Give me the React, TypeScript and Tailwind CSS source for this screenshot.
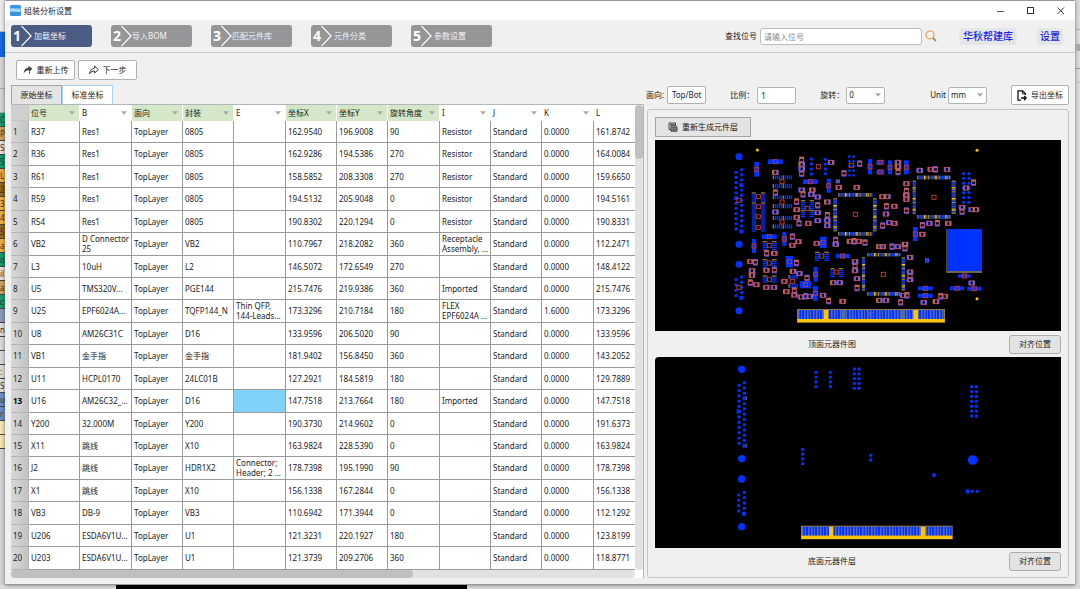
import React, { useState } from "react";

const BLUE = "#0033ff";
const GOLD = "#ffc400";
const RUST = "#b83a34";

type Pt = [number, number];
type Box = [number, number, number, number];

const headers: [string, boolean][] = [
  ["位号", true], ["B", false], ["面向", true], ["封装", true], ["E", false], ["坐标X", true],
  ["坐标Y", true], ["旋转角度", true], ["I", false], ["J", false], ["K", false], ["L", false],
];

const rows: string[][] = [
  ["R37", "Res1", "0805", "", "162.9540", "196.9008", "90", "Resistor", "0.0000", "161.8742"],
  ["R36", "Res1", "0805", "", "162.9286", "194.5386", "270", "Resistor", "0.0000", "164.0084"],
  ["R61", "Res1", "0805", "", "158.5852", "208.3308", "270", "Resistor", "0.0000", "159.6650"],
  ["R59", "Res1", "0805", "", "194.5132", "205.9048", "0", "Resistor", "0.0000", "194.5161"],
  ["R54", "Res1", "0805", "", "190.8302", "220.1294", "0", "Resistor", "0.0000", "190.8331"],
  ["VB2", "D Connector\n25", "VB2", "", "110.7967", "218.2082", "360", "Receptacle\nAssembly, ...", "0.0000", "112.2471"],
  ["L3", "10uH", "L2", "", "146.5072", "172.6549", "270", "", "0.0000", "148.4122"],
  ["U5", "TMS320V...", "PGE144", "", "215.7476", "219.9386", "360", "Imported", "0.0000", "215.7476"],
  ["U25", "EPF6024A...", "TQFP144_N", "Thin QFP,\n144-Leads...", "173.3296", "210.7184", "180", "FLEX\nEPF6024A ...", "1.6000", "173.3296"],
  ["U8", "AM26C31C", "D16", "", "133.9596", "206.5020", "90", "", "0.0000", "133.9596"],
  ["VB1", "金手指", "金手指", "", "181.9402", "156.8450", "360", "", "0.0000", "143.2052"],
  ["U11", "HCPL0170", "24LC01B", "", "127.2921", "184.5819", "180", "", "0.0000", "129.7889"],
  ["U16", "AM26C32_...", "D16", "", "147.7518", "213.7664", "180", "Imported", "0.0000", "147.7518"],
  ["Y200", "32.000M", "Y200", "", "190.3730", "214.9602", "0", "", "0.0000", "191.6373"],
  ["X11", "跳线", "X10", "", "163.9824", "228.5390", "0", "", "0.0000", "163.9824"],
  ["J2", "跳线", "HDR1X2", "Connector;\nHeader; 2 ...", "178.7398", "195.1990", "90", "", "0.0000", "178.7398"],
  ["X1", "跳线", "X10", "", "156.1338", "167.2844", "0", "", "0.0000", "156.1338"],
  ["VB3", "DB-9", "VB3", "", "110.6942", "171.3944", "0", "", "0.0000", "112.1292"],
  ["U206", "ESDA6V1U...", "U1", "", "121.3231", "220.1927", "180", "", "0.0000", "123.8199"],
  ["U203", "ESDA6V1U...", "U1", "", "121.3739", "209.2706", "360", "", "0.0000", "118.8771"],
];

const expand = (r: string[]) => [r[0], r[1], "TopLayer", r[2], r[3], r[4], r[5], r[6], r[7], "Standard", r[8], r[9]];

/* ---------- board drawings ---------- */

function Fins({ b, vertical }: { b: Box; vertical?: boolean }) {
  const [x0, y0, x1, y1] = b;
  const out: React.ReactNode[] = [];
  const len = vertical ? x1 - x0 : y1 - y0;
  for (let i = 0, k = 0; i < len; i += 6, k++) {
    const fill = k === 0 || k === 5 ? "#8c7440" : BLUE;
    out.push(
      vertical ? <rect key={i} x={x0 + i} y={y0} width={4} height={y1 - y0} fill={fill} />
        : <rect key={i} x={x0} y={y0 + i} width={x1 - x0} height={4} fill={fill} />
    );
  }
  return <>{out}</>;
}

function Pins({ b, vertical }: { b: Box; vertical?: boolean }) {
  const [x0, y0, x1, y1] = b;
  const colors = ["#a88a3c", BLUE, BLUE, "#2a45b0", BLUE, GOLD, "#b8963c", BLUE];
  const len = vertical ? y1 - y0 : x1 - x0;
  const out: React.ReactNode[] = [<rect key="bg" x={x0} y={y0} width={x1 - x0} height={y1 - y0} fill="#3a3820" />];
  for (let i = 0, k = 0; i < len; i += 4, k++) {
    const fill = colors[k % 8];
    out.push(
      vertical ? <rect key={i} x={x0} y={y0 + i} width={x1 - x0} height={3} fill={fill} />
        : <rect key={i} x={x0 + i} y={y0} width={3} height={y1 - y0} fill={fill} />
    );
  }
  return <>{out}</>;
}

function Mark({ x, y }: { x: number; y: number }) {
  return <rect x={x - 6} y={y - 6} width={12} height={12} fill="none" stroke={RUST} strokeWidth={3} />;
}

function Chip({ x, y, i }: { x: number; y: number; i: number }) {
  return (
    <g>
      {i % 3 === 1 ? (
        <>
          <rect x={x - 7} y={y - 10} width={14} height={7} fill={i % 2 ? "#a8784c" : "#5a5ae8"} />
          <rect x={x - 7} y={y + 3} width={14} height={7} fill="#3a48f0" />
        </>
      ) : (
        <>
          <rect x={x - 10} y={y - 7} width={7} height={14} fill={i % 4 ? "#4a50f0" : "#a8784c"} />
          <rect x={x + 3} y={y - 7} width={7} height={14} fill="#6a60e8" />
        </>
      )}
      <rect x={x - 6} y={y - 6} width={12} height={12} fill="none" stroke="#c85060" strokeWidth={3} />
    </g>
  );
}

function Dots({ x, y0, y1, n, r = 5 }: { x: number; y0: number; y1: number; n: number; r?: number }) {
  return (
    <>
      {Array.from({ length: n }, (_, i) => (
        <circle key={i} cx={x} cy={y0 + ((y1 - y0) * i) / (n - 1)} r={r} fill={BLUE} />
      ))}
    </>
  );
}

function EdgeConnector({ x0, x1, y, gaps, greys }: { x0: number; x1: number; y: number; gaps: Pt[]; greys: Pt[] }) {
  const n = Math.floor((x1 - x0) / 9);
  return (
    <g>
      <rect x={x0} y={y} width={x1 - x0} height={41} fill="#8f7a3a" />
      <rect x={x0 + 3} y={y + 3} width={x1 - x0 - 6} height={27} fill={BLUE} />
      {Array.from({ length: n }, (_, i) => (
        <rect key={i} x={x0 + 4 + i * 9} y={y + 2} width={i % 3 === 1 ? 2 : 3} height={28} fill={i % 2 ? "#a08c48" : "#7f80a0"} />
      ))}
      {greys.map(([a, b]) => <rect key={a} x={a} y={y + 3} width={b - a} height={27} fill="#5068b0" />)}
      {gaps.map(([a, b]) => <rect key={a} x={a} y={y + 3} width={b - a} height={28} fill={GOLD} />)}
      <rect x={x0 + 1} y={y + 30} width={x1 - x0 - 2} height={10} fill={GOLD} />
    </g>
  );
}

const chips: Pt[] = [
  [376, 112], [376, 173], [376, 231], [543, 82], [582, 115], [566, 157], [620, 157], [455, 75], [455, 88], [455, 102], [455, 116],
  [455, 165], [487, 165], [459, 178], [484, 178], [503, 186], [503, 211], [503, 233], [503, 257], [440, 200], [440, 224], [440, 247],
  [447, 265], [475, 265], [532, 201], [532, 241], [532, 256], [532, 272], [427, 305], [427, 331], [445, 320], [350, 355], [373, 355],
  [301, 380], [316, 382], [306, 407], [306, 421], [301, 443], [319, 449], [349, 406], [373, 405], [349, 457], [372, 457], [439, 384],
  [429, 409], [448, 416], [471, 429], [403, 439], [409, 470], [433, 467], [433, 480], [453, 486], [467, 484], [479, 484], [519, 481],
  [536, 498], [578, 499], [500, 325], [557, 315], [557, 328], [600, 319], [612, 319], [626, 319], [615, 380], [615, 393], [615, 407],
  [621, 431], [621, 459], [550, 443], [569, 443], [629, 86], [744, 82], [744, 95], [744, 111], [809, 106], [842, 103], [856, 103],
  [891, 103], [769, 146], [769, 168], [769, 180], [769, 193], [769, 227], [697, 185], [712, 185], [709, 214], [733, 214], [708, 237],
  [698, 272], [718, 263], [733, 265], [645, 323], [688, 335], [698, 335], [726, 335], [743, 335], [765, 328], [765, 340], [780, 367],
  [780, 411], [780, 423], [780, 434], [759, 481], [771, 481], [688, 496], [708, 496], [752, 502], [821, 502], [858, 500], [872, 484],
  [884, 484], [965, 444], [817, 271], [817, 298], [838, 265], [862, 265], [895, 265], [936, 217], [936, 230], [965, 224], [978, 224],
  [971, 143], [948, 159],
];

/* centre x, centre y, width, height */
const bars: Box[] = [
  [376, 80, 44, 14], [320, 103, 14, 44], [481, 140, 44, 14], [536, 152, 12, 42], [358, 305, 44, 14], [403, 312, 12, 42],
  [312, 333, 12, 42], [418, 380, 22, 34], [520, 322, 20, 34], [578, 363, 42, 13], [466, 449, 34, 22], [497, 418, 12, 44],
  [496, 475, 14, 44], [660, 95, 12, 46], [720, 97, 12, 42], [769, 97, 14, 42], [691, 82, 24, 14], [691, 111, 24, 14],
  [826, 460, 44, 12], [826, 482, 44, 12], [921, 460, 42, 12], [973, 461, 42, 12], [943, 423, 38, 10], [796, 297, 14, 42],
];

const finsH: Box[] = [
  [305, 172, 318, 290], [333, 172, 346, 290], [338, 318, 352, 346], [366, 318, 380, 346], [338, 372, 352, 400], [366, 372, 380, 400],
  [338, 421, 352, 445], [366, 421, 380, 445], [453, 195, 466, 248], [479, 195, 492, 248], [495, 350, 509, 375], [523, 350, 537, 375],
  [541, 399, 554, 424], [567, 399, 580, 424],
];
const finsV: Box[] = [
  [368, 121, 424, 133], [368, 147, 424, 160], [368, 181, 424, 192], [368, 207, 424, 220], [368, 243, 424, 255], [368, 268, 424, 281],
  [415, 420, 440, 432], [415, 446, 440, 459],
];
const pinsH: Box[] = [
  [565, 174, 666, 185], [565, 291, 666, 302], [802, 122, 902, 133], [802, 240, 902, 251], [652, 354, 750, 364], [652, 471, 750, 482],
];
const pinsV: Box[] = [
  [550, 190, 561, 287], [669, 190, 680, 287], [788, 137, 797, 237], [905, 137, 917, 237], [636, 367, 645, 467], [755, 367, 765, 467],
];
const marks: Pt[] = [
  [505, 95], [604, 91], [616, 238], [325, 185], [325, 215], [325, 245], [325, 277], [358, 331], [358, 384], [358, 433], [472, 220],
  [515, 363], [560, 411], [427, 439], [396, 140], [396, 201], [396, 261], [267, 196], [267, 457], [852, 187], [700, 418],
];

function TopBoard() {
  return (
    <svg viewBox="15 15 1218 573" className="block h-auto w-full bg-black" role="img" aria-label="顶面元器件图">
      {[65, 328, 388, 527].map((y) => <circle key={y} cx={267} cy={y} r={10.5} fill={BLUE} />)}
      <Dots x={258} y0={112} y1={282} n={12} />
      <Dots x={275} y0={104} y1={288} n={13} />
      <Dots x={258} y0={434} y1={482} n={4} />
      <Dots x={275} y0={426} y1={488} n={5} />
      {[[274, 150], [258, 189], [274, 289], [274, 488]].map(([x, y]) => <rect key={`${x}-${y}`} x={x - 6} y={y - 5} width={12} height={11} fill={BLUE} />)}
      <Dots x={484} y0={72} y1={117} n={4} />
      <Dots x={526} y0={73} y1={116} n={4} />
      <Dots x={598} y0={65} y1={121} n={5} r={4} />
      <Dots x={611} y0={65} y1={121} n={5} r={4} />
      <Dots x={941} y0={116} y1={202} n={7} />
      <Dots x={957} y0={116} y1={202} n={7} />
      {finsH.map((b, i) => <Fins key={i} b={b} />)}
      {finsV.map((b, i) => <Fins key={i} b={b} vertical />)}
      {pinsH.map((b, i) => <Pins key={i} b={b} />)}
      {pinsV.map((b, i) => <Pins key={i} b={b} vertical />)}
      {bars.map(([x, y, w, h], i) => (
        <g key={i}>
          <rect x={x - w / 2} y={y - h / 2} width={w} height={h} fill={BLUE} />
          <Mark x={x} y={y} />
        </g>
      ))}
      {chips.map(([x, y], i) => <Chip key={i} x={x} y={y} i={i} />)}
      {marks.map(([x, y], i) => <Mark key={i} x={x} y={y} />)}
      <rect x={557} y={133} width={13} height={12} fill="#5558a8" />
      <rect x={825} y={370} width={13} height={13} fill={BLUE} />
      <rect x={826} y={371} width={10} height={10} fill="none" stroke="#7a48b8" strokeWidth={2} />
      <rect x={889} y={282} width={107} height={132} fill="#6f6648" />
      <rect x={891} y={282} width={105} height={126} fill={BLUE} />
      {[[322, 45], [981, 46], [981, 491]].map(([x, y]) => <circle key={`${x}-${y}`} cx={x} cy={y} r={4.5} fill={GOLD} />)}
      <EdgeConnector x0={441} x1={885} y={522} gaps={[[521, 535], [790, 804]]} greys={[[575, 587], [752, 765]]} />
      <rect x={658} y={532} width={12} height={12} fill="none" stroke="#7a48d8" strokeWidth={2} />
    </svg>
  );
}

function BottomBoard() {
  return (
    <svg viewBox="15 82 1218 573" className="block h-auto w-full rounded-tl-sm bg-black" role="img" aria-label="底面元器件层">
      {[119, 387, 448, 591].map((y) => <circle key={y} cx={275} cy={y} r={11} fill={BLUE} />)}
      <Dots x={267} y0={167} y1={341} n={12} />
      <Dots x={283} y0={159} y1={348} n={13} />
      <Dots x={266} y0={496} y1={544} n={4} />
      <Dots x={283} y0={488} y1={552} n={5} />
      {[[284, 206], [266, 245], [284, 348], [282, 552], [953, 485]].map(([x, y]) => (
        <rect key={`${x}-${y}`} x={x - 6} y={y - 6} width={12} height={12} fill={BLUE} />
      ))}
      <rect x={289} y={201} width={2} height={10} fill="#a87820" />
      <rect x={289} y={343} width={2} height={10} fill="#a87820" />
      <Dots x={498} y0={128} y1={171} n={4} />
      <Dots x={541} y0={128} y1={171} n={4} />
      <Dots x={613} y0={118} y1={176} n={5} />
      <Dots x={627} y0={118} y1={176} n={5} />
      <Dots x={458} y0={359} y1={402} n={4} />
      <Dots x={965} y0={171} y1={259} n={7} />
      <Dots x={979} y0={171} y1={259} n={7} />
      <Dots x={662} y0={377} y1={391} n={2} />
      <rect x={847} y={431} width={10} height={11} fill={BLUE} />
      <circle cx={968} cy={391} r={14.5} fill={BLUE} />
      <circle cx={967} cy={485} r={5} fill={BLUE} />
      <circle cx={982} cy={485} r={5} fill={BLUE} />
      <EdgeConnector x0={453} x1={908} y={588} gaps={[[537, 550], [812, 826]]} greys={[]} />
    </svg>
  );
}

/* ---------- chrome ---------- */

const steps = ["加载坐标", "导入BOM", "匹配元件库", "元件分类", "参数设置"];

function Step({ n, label, active, onClick }: { n: number; label: string; active: boolean; onClick: () => void }) {
  return (
    <button
      type="button"
      onClick={onClick}
      aria-current={active ? "step" : undefined}
      className={`flex h-[22px] w-[81px] items-center overflow-hidden rounded-[3px] pl-0.5 text-[#f2f2f2] ${active ? "bg-[#4b5d84]" : "bg-[#969698]"}`}
    >
      <span className="w-2 text-sm leading-[22px] font-bold text-white">{n}</span>
      <svg viewBox="0 0 12 22" className="h-[22px] w-[11px] shrink-0" fill="none" stroke="#fff" strokeWidth="1.3" aria-hidden="true">
        <path d="M0.5 0 L11 11 L0.5 22" />
      </svg>
      <span className={label.length === 5 ? "" : "pl-0.5"}>{label}</span>
    </button>
  );
}

function Caret() {
  return (
    <svg viewBox="0 0 6 4" className="h-1 w-1.5 shrink-0" aria-hidden="true">
      <path d="M0 0.2H6L3 3.8Z" fill="#a9a9a9" />
    </svg>
  );
}

function Drop({ id, value }: { id: string; value: string }) {
  const options = id === "unit" ? ["mm", "mil", "inch"] : ["0", "90", "180", "270"];
  return (
    <span className="relative flex w-[39px] items-center">
      <select id={id} defaultValue={value} className="h-[17px] w-full appearance-none rounded-[2px] border border-[#b4b4b4] bg-white pl-0.5">
        {options.map((o) => <option key={o}>{o}</option>)}
      </select>
      <span className="pointer-events-none absolute right-1"><Caret /></span>
    </span>
  );
}

const whiteButton = "flex h-5 items-center justify-center gap-1 rounded-[2px] border border-[#b0b0b0] bg-white";
const greyButton = "rounded-[3px] border border-[#adadad] bg-[#e3e3e3]";

const layers: [string, string][] = [
  ["C", "bg-[#1b9a6c]"], ["P", "bg-[#c8a468]"], ["Si", "bg-[#e6e0dc]"], ["S", "bg-[#1b9a6c]"], ["L", "bg-[#e8ae48]"],
  ["2", "bg-[#96691c]"], ["3", "bg-[#e8ae48]"], ["4", "bg-[#e8ae48]"], ["5", "bg-[#96691c]"], ["a", "bg-[#e8ae48]"],
  ["o", "bg-[#1b9a6c]"], ["il", "bg-[#e6e0dc]"], ["a", "bg-[#c8a468]"], ["c", "bg-[#1b9a6c]"], ["", "bg-[#8b9bb5]"],
  ["n", "bg-[#dcdcdc]"], ["", "bg-[#d8d8d8]"], ["", "bg-[#d8d8d8]"], [":", "bg-[#dcdcdc]"], ["S", "bg-[#dcdcdc]"],
  ["u", "bg-[#6a8cc8]"], ["r", "bg-[#6a8cc8]"], ["", "bg-[#f2e6b4]"], ["", "bg-[#f2e6b4]"],
];

export default function App() {
  const [step, setStep] = useState(1);
  const [tab, setTab] = useState(1);
  return (
    <div className="flex min-h-screen flex-col bg-[#dedede] font-['Noto_Sans','Noto_Sans_CJK_SC',sans-serif] text-[8px] leading-[10px] text-[#222]">
      <div className="flex">
        <aside className="w-[5px] shrink-0 bg-[#d4d4d4]" aria-hidden="true">
          <div className="h-8 border-b border-[#bbb] bg-[#ececec]" />
          <div className="h-[25px] bg-[#1467e0]" />
          <div className="h-8 border-b border-[#aaa]" />
          <div className="h-6 border-b border-[#aaa]" />
          {layers.map(([t, c], i) => (
            <div key={i} className={`h-[14px] border-b border-[#444] pt-0.5 text-[#333] ${c}`}>{t}</div>
          ))}
        </aside>

        <main className="flex min-w-0 flex-1 flex-col border-y border-t-[#999] border-b-[#999] bg-[#f0f0f0] shadow-[0_0_4px_rgba(0,0,0,0.5)]">
          <header className="flex h-[19px] items-center bg-white pr-2.5 pl-[5px]">
            <svg viewBox="0 0 11 11" className="mr-[3px] h-[11px] w-[11px]" aria-hidden="true">
              <rect width="11" height="11" rx="1.5" fill="#3a94e6" />
              <rect y="3" width="11" height="4" fill="#73b9f4" />
              <path d="M1 6.5V4.5H3V6.5M4 6.5V4.2L6 6.5V4.2M7 4.5L8 6.5L8.5 5L9 6.5L10 4.5" fill="none" stroke="#e9f5ff" strokeWidth="0.8" />
            </svg>
            <h1>组装分析设置</h1>
            <div className="ml-auto flex items-center gap-[22px]">
              <button type="button" aria-label="最小化" className="flex h-3 w-2 items-center">
                <svg viewBox="0 0 8 8" className="h-2 w-2" stroke="#555"><path d="M0 4.5H7" /></svg>
              </button>
              <button type="button" aria-label="最大化" className="flex h-3 w-2 items-center">
                <svg viewBox="0 0 8 8" className="h-2 w-2" fill="none" stroke="#333"><rect x="0.5" y="0.5" width="6" height="6" /></svg>
              </button>
              <button type="button" aria-label="关闭" className="flex h-3 w-2 items-center">
                <svg viewBox="0 0 8 8" className="h-2 w-2" stroke="#333"><path d="M0.5 0.5L7 7M7 0.5L0.5 7" /></svg>
              </button>
            </div>
          </header>

          <nav className="flex h-[33px] items-center border-b border-[#c8c8c8] pr-3 pl-1.5">
            <div className="flex gap-[19px]">
              {steps.map((s, i) => <Step key={s} n={i + 1} label={s} active={step === i + 1} onClick={() => setStep(i + 1)} />)}
            </div>
            <label htmlFor="find" className="ml-auto">查找位号</label>
            <input id="find" placeholder="请输入位号" className="ml-[3px] h-[17px] w-[162px] rounded-[3px] border border-[#bcbcbc] bg-white px-[3px] placeholder:text-[#888]" />
            <button type="button" aria-label="查找" className="ml-[3px]">
              <svg viewBox="0 0 12 12" className="h-3 w-3" fill="none">
                <circle cx="5" cy="5" r="4" stroke="#e0a050" strokeWidth="1.2" />
                <path d="M8 8L11 11" stroke="#777" strokeWidth="1.4" />
              </svg>
            </button>
            <a href="#library" className="ml-[22px] rounded-[4px] bg-[#e6e6e8] px-1 text-[10px] leading-[17px] font-medium text-[#2222e0]">华秋帮建库</a>
            <a href="#settings" className="ml-5 rounded-[4px] bg-[#e6e6e8] px-[3px] text-[10px] leading-[17px] font-medium text-[#2222e0]">设置</a>
          </nav>

          <div className="flex gap-0.5 px-1.5 pb-1.5">
            <section className="min-w-0 flex-1">
              <div className="flex gap-[3px] pt-[7px] pb-[5px] pl-[5px]">
                <button type="button" className={`${whiteButton} w-[59px]`}>
                  <svg viewBox="0 0 10 10" className="h-2.5 w-2.5 shrink-0" aria-hidden="true">
                    <path d="M5.4 0.8L9.4 3.8L6 7V5.2C3.4 5.2 1.8 6.2 0.8 8.6C0.7 5.2 2.4 2.9 5.4 2.7Z" fill="#444" />
                    <path d="M6.6 8.8V6.4" stroke="#444" />
                  </svg>
                  重新上传
                </button>
                <button type="button" className={`${whiteButton} w-[59px]`}>
                  <svg viewBox="0 0 10 10" className="h-2.5 w-2.5 shrink-0" fill="none" stroke="#333" strokeWidth="1" aria-hidden="true">
                    <path d="M5.6 1L9.4 4.6L5.6 8V6C3.4 6 1.8 6.8 0.7 8.8C0.9 5.6 2.6 3.4 5.6 3.1Z" />
                  </svg>
                  下一步
                </button>
              </div>
              <div className="flex" role="tablist">
                {["原始坐标", "标准坐标"].map((t, i) => (
                  <button
                    key={t}
                    type="button"
                    role="tab"
                    aria-selected={tab === i}
                    onClick={() => setTab(i)}
                    className={`h-[19px] w-[51px] border border-b-0 ${tab === i ? "border-[#a9d2f3] bg-white" : "border-[#a6a6a6] bg-[#e4e4e4]"}`}
                  >
                    {t}
                  </button>
                ))}
              </div>
              <div className="border-t border-r border-[#b4b4bc] bg-white">
                <div className="flex">
                  <div className="min-w-0 flex-1 overflow-hidden">
                    <table className="w-full table-fixed border-separate border-spacing-0 text-left">
                      <colgroup>
                        <col className="w-[18px]" />
                        {headers.map(([h], i) => (
                          <col key={h} className={i === 11 ? "" : i % 3 === 1 ? "w-[52px]" : "w-[51px]"} />
                        ))}
                      </colgroup>
                      <thead>
                        <tr>
                          <th className="h-4 border-r border-b border-[#c4c4c4] bg-[#cfcfcf] p-0" aria-label="行号" />
                          {headers.map(([h, on]) => (
                            <th key={h} className={`h-4 border-r border-white p-0 font-normal ${on ? "bg-[#d4e8c9]" : "bg-white"}`}>
                              <div className="flex items-center justify-between pr-1 pl-0.5">
                                <span className="whitespace-nowrap">{h}</span>
                                {h !== "L" && <Caret />}
                              </div>
                            </th>
                          ))}
                        </tr>
                      </thead>
                      <tbody>
                        {rows.map((r, ri) => (
                          <tr key={r[0]} className={[1, 3, 5].includes(ri % 7) ? "h-[23px]" : "h-[22px]"}>
                            <th className={`border-r border-b border-[#b5b5b5] bg-linear-to-r from-[#d8d8d8] to-[#c3c3c3] p-0 pl-0.5 ${ri === 12 ? "font-bold text-black" : "font-normal"}`}>
                              {ri + 1}
                            </th>
                            {expand(r).map((c, ci) => (
                              <td
                                key={ci}
                                className={`overflow-hidden border-b border-[#9a9a9a] p-0 pl-0.5 whitespace-pre ${ci < 11 ? "border-r" : ""} ${ri === 12 && ci === 4 ? "bg-[#80d1f7]" : ""}`}
                              >
                                {c}
                              </td>
                            ))}
                          </tr>
                        ))}
                      </tbody>
                    </table>
                  </div>
                  <div className="w-2 rounded-full bg-[#e2e2e2]"><div className="h-[54px] rounded-full bg-[#c0c0c0]" /></div>
                </div>
                <div className="mr-2 h-2 rounded-r-full bg-[#e2e2e2]"><div className="h-full w-[64.5%] rounded-full bg-[#c0c0c0]" /></div>
              </div>
            </section>

            <section className="flex w-[423px] shrink-0 flex-col pt-8">
              <div className="flex h-5 items-center">
                <span>面向:</span>
                <button type="button" className="ml-[3px] h-[18px] w-[39px] rounded-[2px] border border-[#b0b0b0] bg-white whitespace-nowrap">Top/Bot</button>
                <label htmlFor="scale" className="ml-6 w-[27px]">比例：</label>
                <input id="scale" defaultValue="1" className="h-[17px] w-[39px] rounded-[2px] border border-[#b4b4b4] bg-white px-[3px]" />
                <label htmlFor="rotate" className="ml-6 w-[26px]">旋转：</label>
                <Drop id="rotate" value="0" />
                <label htmlFor="unit" className="mr-0.5 ml-auto">Unit</label>
                <Drop id="unit" value="mm" />
                <button type="button" className={`${whiteButton} ml-6 w-[58px]`}>
                  <svg viewBox="0 0 10 11" className="h-[11px] w-2.5 shrink-0" fill="none" stroke="#111" strokeWidth="1.3" aria-hidden="true">
                    <path d="M4 10.2H1V0.8H5.6L8.4 3.6V5" />
                    <path d="M5.4 0.8V3.8H8.4" strokeWidth="0.9" />
                    <path d="M4 8H9M7 5.9L9.2 8L7 10.2" />
                  </svg>
                  导出坐标
                </button>
              </div>
              <div className="mt-1 ml-px flex-1 rounded-[3px] border border-[#c6c6c6] px-[7px] pt-[7px]">
                <button type="button" className="mb-[3px] flex h-5 w-24 items-center justify-center gap-1 border border-[#a4a4a4] bg-[#e3e3e3]">
                  <svg viewBox="0 0 10 10" className="h-2.5 w-2.5 shrink-0" fill="none" stroke="#444" aria-hidden="true">
                    <path d="M7.5 3V1H1V7.5H3" />
                    <path d="M3 3H7.2L9 5V9.2H3Z" fill="#888" />
                    <path d="M2 2.5H6M4.5 5.4H7.5M4.5 7.2H7.5" strokeWidth="0.8" />
                  </svg>
                  重新生成元件层
                </button>
                <TopBoard />
                <div className="flex h-[26px] items-center">
                  <span className="flex-1 text-center">顶面元器件图</span>
                  <button type="button" className={`${greyButton} h-[19px] w-[52px]`}>对齐位置</button>
                </div>
                <BottomBoard />
                <div className="flex h-[26px] items-center">
                  <span className="flex-1 text-center">底面元器件层</span>
                  <button type="button" className={`${greyButton} h-[19px] w-[52px]`}>对齐位置</button>
                </div>
              </div>
            </section>
          </div>
        </main>

        <aside className="w-[5px] shrink-0" aria-hidden="true">
          <div className="h-[30px] border-b border-[#aaa]" />
          <div className="h-3.5" />
          <div className="h-[7px] bg-[#a8a8a8]" />
          <div className="h-[18px] border-b border-[#999]" />
          <div className="h-3.5 border-b border-[#bbb]" />
        </aside>
      </div>
      <footer className="flex min-h-1 flex-1 pl-[116px]" aria-hidden="true">
        <div className="w-[351px] bg-black" />
      </footer>
    </div>
  );
}
